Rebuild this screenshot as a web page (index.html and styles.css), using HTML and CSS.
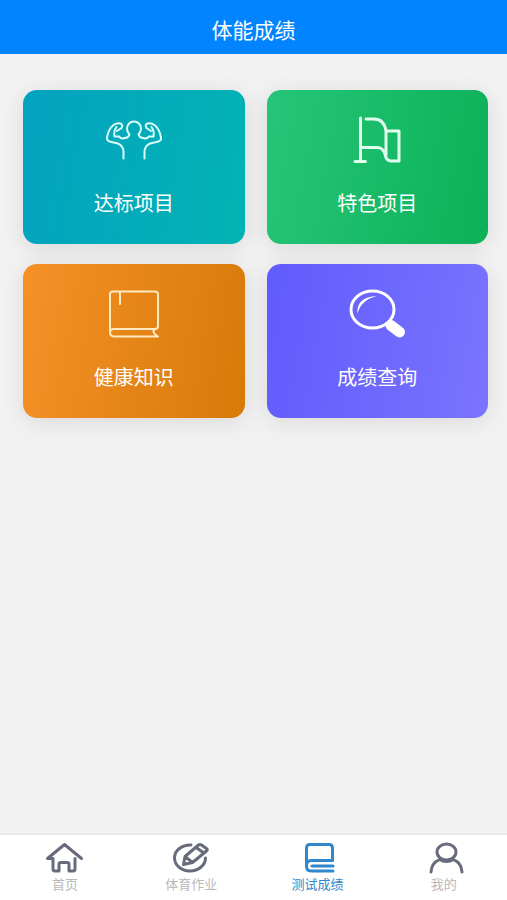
FILE: index.html
```html
<!DOCTYPE html>
<html lang="zh-CN">
<head>
<meta charset="utf-8">
<meta name="viewport" content="width=device-width, initial-scale=1">
<title>体能成绩</title>
<link rel="stylesheet" href="styles.css">
</head>
<body>
<header class="header"><h1 class="title">体能成绩</h1></header>
<main class="cards">
  <a class="card card-teal" href="#standard">
    <svg class="card-icon" viewBox="0 0 60 52" aria-hidden="true">
      <path d="M19.500 44.500V38Q19.500 32 14 29.500L5.500 27.500Q2.500 26.500 3 23.500Q4.500 15 9.500 11Q13 8.500 16.500 9.500Q19.500 11 17.500 14L13 17M12.500 13Q9.500 17 10.500 22.500H15Q17.500 25.500 20.500 24Q24 24.500 25.500 20.500Q23 18 23 14.500A7 7 0 0 1 37 14.500Q37 18 34.500 20.500Q36 24.500 39.500 24Q42.500 25.500 45 22.500H49.500Q50.500 17 47.500 13M40.500 44.500V38Q40.500 32 46 29.500L54.500 27.500Q57.500 26.500 57 23.500Q55.500 15 50.500 11Q47 8.500 43.500 9.500Q40.500 11 42.500 14L47 17"/>
    </svg>
    <span class="card-label">达标项目</span>
  </a>
  <a class="card card-green" href="#special">
    <svg class="card-icon card-icon-bold" viewBox="0 0 60 52" aria-hidden="true">
      <path d="M13.500 4V47.500M8 47.500H18.500M19 5H27Q37 5 39 17H52V47H44Q39 47 38 40Q36 33.500 30 33.500H13.500M39 17V41"/>
    </svg>
    <span class="card-label">特色项目</span>
  </a>
  <a class="card card-orange" href="#health">
    <svg class="card-icon card-icon-thin" viewBox="0 0 60 52" aria-hidden="true">
      <path d="M6 44V6Q6 3.500 9 3.500H51Q54 3.500 54 6V38Q54 41 51 41H10Q6 41 6 44.500T10 48.500H54Q47 44.500 51 41M16 3.500V16"/>
    </svg>
    <span class="card-label">健康知识</span>
  </a>
  <a class="card card-violet" href="#query">
    <svg class="card-icon card-icon-bold" viewBox="0 0 60 52" aria-hidden="true">
      <ellipse cx="25.500" cy="21.500" rx="21.500" ry="18.500"/>
      <path class="fill" d="M10.500 25.500Q9 9 30 8Q14 12 10.500 25.500Z"/>
      <path class="handle" d="M44 37.500L52.500 44"/>
    </svg>
    <span class="card-label">成绩查询</span>
  </a>
</main>
<nav class="tabs">
  <a class="tab" href="#home">
    <svg class="tab-icon" viewBox="0 0 40 32" aria-hidden="true"><path d="M2.500 16.500L19.500 2.500L36.500 16.500M2.500 16.500H8V27Q8 29 10 29H14V22Q14 20.500 16 20.500H22Q24 20.500 24 22V29H28Q30 29 30 27V16.500"/></svg>
    <span>首页</span>
  </a>
  <a class="tab" href="#homework">
    <svg class="tab-icon" viewBox="0 0 40 32" aria-hidden="true"><path d="M20 3A15.500 13 0 1 0 34.500 16M12.500 22.500L14 14.500L27.500 3Q29 2 30.500 3L35.500 6.500Q37 7.500 35.500 9L21.500 20.500ZM25 5.500L33 11M14 14.500L21.500 20.500"/></svg>
    <span>体育作业</span>
  </a>
  <a class="tab tab-active" href="#scores" aria-current="page">
    <svg class="tab-icon" viewBox="0 0 40 32" aria-hidden="true"><path d="M35 29H13Q8.500 29 8.500 24V6Q8.500 2.500 12 2.500H31Q34.500 2.500 34.500 6V18.500H13Q8.500 18.500 8.500 24M35 24H14"/></svg>
    <span>测试成绩</span>
  </a>
  <a class="tab" href="#me">
    <svg class="tab-icon" viewBox="0 0 40 32" aria-hidden="true"><ellipse cx="22.500" cy="10" rx="9.500" ry="8"/><path d="M7 30Q7.500 21 15.500 17.500Q22.500 21.500 29.500 17.500Q37.500 21 38 30"/></svg>
    <span>我的</span>
  </a>
</nav>
</body>
</html>
```
FILE: styles.css
```css
* {
  box-sizing: border-box;
}

body {
  margin: 0;
  min-height: 100vh;
  display: flex;
  flex-direction: column;
  background: #f2f2f2;
  font-family: "Noto Sans CJK SC", sans-serif;
}

a {
  color: inherit;
  text-decoration: none;
}

svg {
  fill: none;
  stroke: currentColor;
  stroke-linecap: round;
  stroke-linejoin: round;
}

.header {
  padding: 14px 0 10px;
  background: #0284fe;
  color: #fff;
  text-align: center;
}

.title {
  margin: 0;
  font-size: 21px;
  line-height: 30px;
  font-weight: 400;
}

.cards {
  flex: 1;
  display: grid;
  grid-template-columns: 1fr 1fr;
  align-content: start;
  gap: 20px 22px;
  padding: 36px 19px 36px 23px;
}

.card {
  display: flex;
  flex-direction: column;
  align-items: center;
  gap: 22px;
  padding: 24px 0 26px;
  border-radius: 14px;
  box-shadow: 0 4px 24px rgba(0, 0, 0, 0.1);
  color: #fff;
}

.card-teal {
  background: linear-gradient(100deg, #03a3c0, #02b3b3);
}

.card-green {
  background: linear-gradient(100deg, #26c578, #0bb157);
}

.card-orange {
  background: linear-gradient(100deg, #f69127, #d77a08);
}

.card-violet {
  background: linear-gradient(100deg, #605bfc, #7a74ff);
}

.card-icon {
  width: 60px;
  height: 52px;
  stroke-width: 2;
  color: #d9fdfb;
}

.card-icon-bold {
  stroke-width: 3;
  color: #e2ffee;
}

.card-icon-thin {
  color: #ffe9c0;
}

.card-violet .card-icon {
  color: #fff;
}

.fill {
  fill: currentColor;
  stroke: none;
}

.handle {
  stroke-width: 11;
}

.card-label {
  font-size: 20px;
  line-height: 30px;
}

.tabs {
  display: grid;
  grid-template-columns: repeat(4, 1fr);
  padding-left: 2px;
  border-top: 2px solid #e9e9e9;
  background: #fff;
}

.tab {
  display: flex;
  flex-direction: column;
  align-items: center;
  padding: 7px 0 6px;
  color: #b9b9bb;
  font-size: 13px;
  line-height: 20px;
}

.tab-icon {
  width: 40px;
  height: 32px;
  stroke-width: 3;
  color: #686b7b;
}

.tab-active,
.tab-active .tab-icon {
  color: #2f87cd;
}
```
